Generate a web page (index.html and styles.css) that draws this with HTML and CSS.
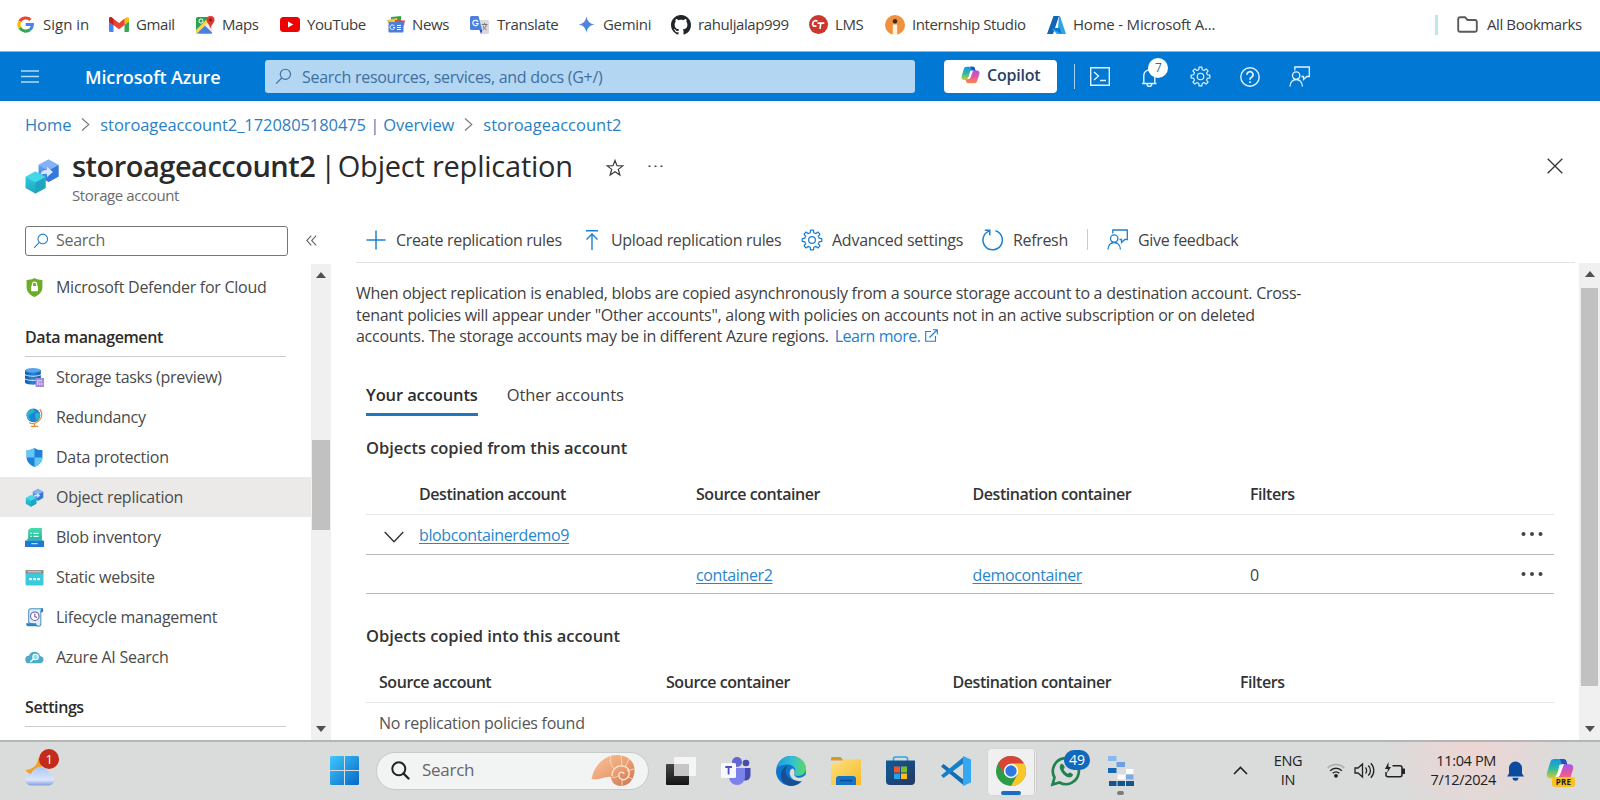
FILE: index.html
```html
<!DOCTYPE html>
<html lang="en">
<head>
<meta charset="utf-8">
<title>storoageaccount2 | Object replication</title>
<link rel="stylesheet" href="styles.css">
</head>
<body>
<svg class="defs" aria-hidden="true">
  <defs>
    <linearGradient id="gTeal" x1="0" y1="0" x2="0" y2="1"><stop offset="0" stop-color="#35d4e4"/><stop offset="1" stop-color="#1fa5c4"/></linearGradient>
    <linearGradient id="gBlue" x1="0" y1="0" x2="0" y2="1"><stop offset="0" stop-color="#7db0f5"/><stop offset="1" stop-color="#2f78d8"/></linearGradient>
    <linearGradient id="gWin" x1="0" y1="0" x2="1" y2="1"><stop offset="0" stop-color="#3fc8fb"/><stop offset="1" stop-color="#0667c8"/></linearGradient>
    <linearGradient id="gCopA" x1="0" y1="0" x2="0" y2="1"><stop offset="0" stop-color="#1693e8"/><stop offset=".5" stop-color="#2fb9a0"/><stop offset="1" stop-color="#d8cf2c"/></linearGradient>
    <linearGradient id="gCopB" x1="0" y1="0" x2="0" y2="1"><stop offset="0" stop-color="#a558e8"/><stop offset=".5" stop-color="#e8569a"/><stop offset="1" stop-color="#f98a4a"/></linearGradient>
    <linearGradient id="gGem" x1="0" y1="0" x2="1" y2="1"><stop offset="0" stop-color="#8f86c8"/><stop offset=".5" stop-color="#4a86e0"/><stop offset="1" stop-color="#2a9be8"/></linearGradient>
    <linearGradient id="gEdge" x1="0" y1="0" x2="1" y2="0"><stop offset="0" stop-color="#1b9de2"/><stop offset=".55" stop-color="#35c1d0"/><stop offset="1" stop-color="#5fd95f"/></linearGradient>
    <linearGradient id="gFold" x1="0" y1="0" x2="1" y2="1"><stop offset="0" stop-color="#ffe07a"/><stop offset="1" stop-color="#f5bb2c"/></linearGradient>
    <linearGradient id="gStore" x1="0" y1="0" x2="1" y2="1"><stop offset="0" stop-color="#0f5c9a"/><stop offset="1" stop-color="#253760"/></linearGradient>
    <linearGradient id="gCloud" x1="0" y1="0" x2="0" y2="1"><stop offset="0" stop-color="#a9c8f5"/><stop offset=".7" stop-color="#dde6fb"/><stop offset="1" stop-color="#7f9fe0"/></linearGradient>
    <linearGradient id="gShell" x1="0" y1="0" x2="1" y2="1"><stop offset="0" stop-color="#f9c49a"/><stop offset=".5" stop-color="#eda277"/><stop offset="1" stop-color="#c9744e"/></linearGradient>
    <linearGradient id="gDb" x1="0" y1="0" x2="1" y2="0"><stop offset="0" stop-color="#0f5ca8"/><stop offset=".5" stop-color="#2a82d8"/><stop offset="1" stop-color="#0f5ca8"/></linearGradient>
    <linearGradient id="gDoc" x1="0" y1="0" x2="0" y2="1"><stop offset="0" stop-color="#46dcae"/><stop offset="1" stop-color="#1fae98"/></linearGradient>
    <linearGradient id="gBlack" x1="0" y1="0" x2="0" y2="1"><stop offset="0" stop-color="#454545"/><stop offset="1" stop-color="#151515"/></linearGradient>
  </defs>
  <symbol id="i-search" viewBox="0 0 18 18"><g fill="none" stroke="currentColor" stroke-width="1.2"><circle cx="11" cy="6.700" r="5.400"/><path d="M7.100 10.600 1.200 16.600"/></g></symbol>
  <symbol id="i-gear" viewBox="0 0 24 24"><g fill="none" stroke="currentColor" stroke-width="1.350" stroke-linejoin="round">
    <circle cx="12" cy="12" r="3.700"/>
    <path id="tooth" d="M8.860 4.420 10 4.300 10.400 1.300h3.200l.4 3 1.140.12"/>
    <use href="#tooth" transform="rotate(45 12 12)"/><use href="#tooth" transform="rotate(90 12 12)"/><use href="#tooth" transform="rotate(135 12 12)"/><use href="#tooth" transform="rotate(180 12 12)"/><use href="#tooth" transform="rotate(225 12 12)"/><use href="#tooth" transform="rotate(270 12 12)"/><use href="#tooth" transform="rotate(315 12 12)"/></g></symbol>
  <symbol id="i-feedback" viewBox="0 0 21 21"><g fill="none" stroke="currentColor" stroke-width="1.300"><circle cx="7.200" cy="9.600" r="3.700"/><path d="M1 20.500c0-4.300 2.800-7 6.200-7s6.200 2.700 6.200 7M5.800 4.500V1h14.500v9.500h-2.500l-3.300 3v-3h-2"/></g></symbol>
  <symbol id="i-cubes" viewBox="0 0 34 36">
    <path d="M23.500 1.500 33.500 7v11.500L23.500 24l-10-5.500V7z" fill="url(#gBlue)"/><path d="M23.500 12.500 33.500 7v11.500L23.500 24z" fill="#3378da"/><path d="M13.500 7l10-5.500 10 5.500-10 5.500z" fill="#85b2f6"/>
    <path d="M10.300 13.500 20.500 19v11L10.300 35.500.5 30V19z" fill="url(#gTeal)"/><path d="M10.300 24.300 20.500 19v11L10.300 35.500z" fill="#1fa5c0"/><path d="M.5 19l9.800-5.500L20.500 19l-10.200 5.300z" fill="#42d8e8"/>
    <path d="M15.500 16.500c.5-3 3-4.500 6.500-4.400V9l6 5-6 5v-3.300c-2.500-.2-4.500.3-6.500.8z" fill="#d5e8fc"/></symbol>
  <symbol id="i-copilot" viewBox="0 0 30 28">
    <path d="M9 1h9.500c2 0 3 1 3.500 3l1 3.500h-4c-2 0-3 .8-3.600 2.700l-3.300 9.500C11.500 21.300 10.500 22 9 22H5c-3.500 0-5-2.500-4-6L4.500 4.500C5.200 2.200 6.500 1 9 1z" fill="url(#gCopA)"/>
    <path d="M15 1h3.500c2 0 3 1 3.500 3l1 3.500h-6z" fill="#264fc0"/>
    <path d="M21 27h-9.500c-2 0-3-1-3.500-3l-.8-3H10c2 0 3-.8 3.600-2.700L17 9c.6-1.700 1.500-2.300 3-2.300h5c3.500 0 5 2.300 4 5.800l-3.500 11C24.800 25.800 23.500 27 21 27z" fill="url(#gCopB)"/>
    <path d="M14.500 7.500c-1.200 3.500-1.500 8.500-4.500 13h1.500c2.600 0 3.200-1.300 4-3.600l3-8.400c.4-1.100 1-1.800 2-1.800h-3.500z" fill="#fff"/></symbol>
  <symbol id="i-dots" viewBox="0 0 22 6"><g fill="#444"><circle cx="2.500" cy="3" r="2"/><circle cx="11" cy="3" r="2"/><circle cx="19.500" cy="3" r="2"/></g></symbol>
  <symbol id="i-chevr" viewBox="0 0 9 15"><path d="M1 1.500 7.800 7.500 1 13.500" fill="none" stroke="#767676" stroke-width="1.100"/></symbol>
</svg>

<nav class="bookmarks">
  <a class="bm"><svg width="17" height="17" viewBox="0 0 18 18" fill="none" stroke-width="3.300"><path d="M3 5.600A7.300 7.300 0 0 1 14.200 4" stroke="#ea4335"/><path d="M3 5.500a7.300 7.300 0 0 0 0 7" stroke="#fbbc05"/><path d="M3 12.400A7.300 7.300 0 0 0 13.700 14.500" stroke="#34a853"/><path d="M9.200 9h7.100a7.300 7.300 0 0 1-2.600 5.500" stroke="#4285f4"/></svg><span class="t-sign">Sign in</span></a>
  <a class="bm"><svg width="20" height="15" viewBox="0 0 20 15"><path d="M0 2.500V13.500A1.400 1.400 0 0 0 1.400 15H4.500V5z" fill="#4285f4"/><path d="M20 2.500V13.500A1.400 1.400 0 0 1 18.600 15H15.500V5z" fill="#34a853"/><path d="M15.500 1.500 18 .3c1-.4 2 .3 2 1.500v3L15.500 8z" fill="#fbbc04"/><path d="M0 1.800C0 .3 1.600-.4 2.700.4L10 6 15.500 1.500V8L10 12.200 0 4.800z" fill="#ea4335"/><path d="M0 1.800C0 .3 1.600-.4 2.700.4L4.500 1.700V8L0 4.800z" fill="#c5221f"/></svg><span>Gmail</span></a>
  <a class="bm"><svg width="19" height="18" viewBox="0 0 19 18"><rect y="1" width="16" height="16.500" rx="1.500" fill="#2ba24c"/><path d="M1 17.500 8.500 9.500l7.500 8z" fill="#4285f4"/><path d="M0 14 12 2l3 3L3 17.500H0z" fill="#fbd34c"/><path d="M16 8v9L8.500 9.800 12 6z" fill="#e8e8e8"/><path d="M9 9.800 16.300 17H1.500z" fill="#4a80e0"/><circle cx="5" cy="5" r="2.100" fill="none" stroke="#fff"/><path d="M14.500 0a4 4 0 0 1 4 4c0 3-3.500 4.500-4 9-.5-4.500-4-6-4-9a4 4 0 0 1 4-4z" fill="#dc3a31"/><circle cx="14.500" cy="4" r="1.500" fill="#8c1a15"/></svg><span>Maps</span></a>
  <a class="bm"><svg width="20" height="15" viewBox="0 0 20 15"><rect width="20" height="15" rx="3.500" fill="#f00000"/><path d="M8 4.500v6l5.300-3z" fill="#fff"/></svg><span>YouTube</span></a>
  <a class="bm"><svg width="18" height="17" viewBox="0 0 18 17"><path d="M4 1 14 0v6H4z" fill="#31a350"/><path d="M0 4 10 2l1 5H1z" fill="#f5c33b"/><path d="m8 4 10 .5-1 5H8z" fill="#e34a3d"/><rect x="1.500" y="6" width="15" height="10.500" rx="1" fill="#4a7fe0"/><path d="M7.400 10A2.300 2.300 0 1 0 7.700 11.500H6M10 9.500h4M10 11.500h4M10 13.500h4" fill="none" stroke="#fff"/></svg><span>News</span></a>
  <a class="bm"><svg width="19" height="18" viewBox="0 0 19 18"><path d="M8 4h9.500A1.500 1.500 0 0 1 19 5.500V16.500A1.500 1.500 0 0 1 17.500 18H11z" fill="#d8dade"/><path d="M1.500 0H8.500L12 14H1.500A1.500 1.500 0 0 1 0 12.500V1.500A1.500 1.500 0 0 1 1.500 0z" fill="#4a80df"/><path d="M9.500 14h3L11 18z" fill="#234bb4"/><path d="M8 5.800A2.700 2.700 0 1 0 8.200 7.500H5.800" fill="none" stroke="#fff" stroke-width="1.200"/><path d="M11.800 8.500h5.700M14.600 7v1.500M16.500 8.500c-.5 2-2 4-3.500 5M13 10c1 2 2 3 3.500 3.800" stroke="#777" fill="none"/></svg><span class="t-tr">Translate</span></a>
  <a class="bm"><svg width="17" height="17" viewBox="0 0 17 17"><path d="M8.500 0C9 5 12 8 17 8.500 12 9 9 12 8.500 17 8 12 5 9 0 8.500 5 8 8 5 8.500 0z" fill="url(#gGem)"/></svg><span class="t-gem">Gemini</span></a>
  <a class="bm"><svg width="20" height="20" viewBox="0 0 16 16"><path fill="#22262b" d="M8 0C3.580 0 0 3.580 0 8c0 3.540 2.290 6.530 5.470 7.590.4.070.55-.17.55-.38 0-.19-.01-.82-.01-1.490-2.010.37-2.530-.49-2.690-.94-.09-.23-.48-.94-.82-1.130-.28-.15-.68-.52-.01-.53.63-.01 1.080.58 1.230.82.72 1.210 1.870.87 2.330.66.07-.52.28-.87.51-1.070-1.780-.2-3.640-.89-3.640-3.950 0-.87.31-1.590.82-2.150-.08-.2-.36-1.020.08-2.120 0 0 .67-.21 2.200.82.64-.18 1.320-.27 2-.27s1.360.09 2 .27c1.530-1.040 2.200-.82 2.200-.82.44 1.100.16 1.920.08 2.120.51.56.82 1.270.82 2.150 0 3.070-1.870 3.750-3.650 3.950.29.25.54.73.54 1.480 0 1.070-.01 1.930-.01 2.200 0 .21.15.46.55.38A8.010 8.010 0 0 0 16 8c0-4.420-3.580-8-8-8z"/></svg><span class="t-gh">rahuljalap999</span></a>
  <a class="bm"><svg width="19" height="19" viewBox="0 0 19 19"><circle cx="9.500" cy="9.500" r="9.500" fill="#c9372f"/><path d="M8.500 6C5.500 5 4 6.500 3.700 8.500S4.500 11.500 7.500 11M8.500 8.200h6.800M11.800 8.200 11 13.800" fill="none" stroke="#fff" stroke-width="1.700"/></svg><span>LMS</span></a>
  <a class="bm"><svg width="20" height="20" viewBox="0 0 20 20"><circle cx="10" cy="10" r="10" fill="#f0913d"/><path d="M7.800 9.500h4.400V20H7.800z" fill="#fff3e2"/><circle cx="10" cy="6.300" r="2.200" fill="#3a2a20"/></svg><span class="t-is">Internship Studio</span></a>
  <a class="bm"><svg width="19" height="18" viewBox="0 0 19 18"><path d="M6.500 0H12L6 18H0z" fill="#1265b4"/><path d="M12 0h1l6 18H10L5 13l6-1z" fill="#2fa5e6"/><path d="M4.800 12H13l1.500 6z" fill="#0d78d0"/></svg><span class="t-home">Home - Microsoft A...</span></a>
  <span class="bm-sep"></span>
  <a class="bm"><svg width="21" height="17" viewBox="0 0 21 17"><path d="M1.200 3a1.800 1.800 0 0 1 1.800-1.800H8L10.500 4H18a1.800 1.800 0 0 1 1.800 1.800V14a1.800 1.800 0 0 1-1.800 1.800H3A1.800 1.800 0 0 1 1.200 14z" fill="none" stroke="#5a5a5a" stroke-width="1.900"/></svg><span class="t-all">All Bookmarks</span></a>
</nav>

<header class="azbar">
  <svg class="burger" width="18" height="13" viewBox="0 0 18 13"><path d="M0 1h18M0 6.500h18M0 12h18" stroke="#b5dcf7" stroke-width="1.300"/></svg>
  <span class="brand">Microsoft Azure</span>
  <div class="gsearch"><svg width="17" height="17"><use href="#i-search"/></svg><span>Search resources, services, and docs (G+/)</span></div>
  <button class="copilot"><svg width="19" height="18"><use href="#i-copilot"/></svg><span>Copilot</span></button>
  <span class="az-sep"></span>
  <div class="az-icons">
    <svg width="20" height="19" viewBox="0 0 20 19"><path d="M.7.700h18.600v17.600H.7zM4 5l4.500 4L4 13M10 13.500h6" fill="none" stroke="#e3f3ff" stroke-width="1.400"/></svg>
    <span class="bell"><svg width="17" height="20" viewBox="0 0 17 20"><path d="M1 16.500h14.500M2.800 16.500V8.500a5.500 5.500 0 0 1 11 0v8M6 17a2.400 2.400 0 0 0 4.800 0" fill="none" stroke="#e3f3ff" stroke-width="1.400"/></svg><b class="bell-n">7</b></span>
    <svg width="21" height="21"><use href="#i-gear"/></svg>
    <svg width="20" height="20" viewBox="0 0 20 20" fill="none" stroke="#e3f3ff"><circle cx="10" cy="10" r="9.200" stroke-width="1.400"/><path d="M7 7.800a3 3 0 1 1 4.500 2.500c-1 .6-1.500 1.200-1.500 2.400M10 14.200v1.800" stroke-width="1.700"/></svg>
    <svg width="21" height="21"><use href="#i-feedback"/></svg>
  </div>
</header>

<nav class="crumbs"><a>Home</a><svg width="9" height="15"><use href="#i-chevr"/></svg><a class="t-cr">storoageaccount2_1720805180475 | Overview</a><svg width="9" height="15"><use href="#i-chevr"/></svg><a class="t-cr2">storoageaccount2</a></nav>

<section class="titlebar">
  <svg class="t-icon" width="34" height="36"><use href="#i-cubes"/></svg>
  <div class="t-text">
    <h1><b>storoageaccount2</b><i>|</i><span>Object replication</span></h1>
    <p>Storage account</p>
  </div>
  <svg class="star" width="18" height="18" viewBox="0 0 18 18"><path d="M9 1.500l2 5.200 5.800.2-4.500 3.500 1.600 5.600L9 12.800 4.100 16l1.600-5.600L1.200 6.900l5.800-.2z" fill="none" stroke="#3b3b3b" stroke-width="1.200"/></svg>
  <svg class="more" width="15" height="3" viewBox="0 0 15 3"><path d="M.5.500h2v1.500h-2zM6.500.500h2v1.500h-2zM12.500.500h2v1.500h-2z" fill="#444"/></svg>
  <svg class="close" width="16" height="16" viewBox="0 0 16 16"><path d="M.7.700l14.600 14.600M15.300.700.7 15.300" stroke="#333" stroke-width="1.300"/></svg>
</section>

<div class="workspace">
  <aside class="side">
    <div class="side-top">
      <div class="ssearch"><svg width="16" height="16"><use href="#i-search"/></svg><span>Search</span></div>
      <svg width="11" height="11" viewBox="0 0 11 11"><path d="M5.300.7.8 5.500l4.500 4.800M10.200.7 5.700 5.500l4.500 4.800" fill="none" stroke="#666" stroke-width="1.100"/></svg>
    </div>
    <div class="side-body">
      <div class="menu">
        <a class="mi"><svg width="19" height="19" viewBox="0 0 18 18"><path d="M9 0c2.500 1.500 4.500 1.800 7.500 1.800V9c0 4-3 7-7.500 9-4.500-2-7.500-5-7.500-9V1.800C4.500 1.800 6.500 1.500 9 0z" fill="#6dac28"/><rect x="5.700" y="7.500" width="6.600" height="5" rx=".6" fill="#fff"/><path d="M7 8V6a2 2 0 0 1 4 0v2" fill="none" stroke="#fff" stroke-width="1.200"/></svg><span class="t-def">Microsoft Defender for Cloud</span></a>
        <h2>Data management</h2>
        <a class="mi"><svg width="19" height="19" viewBox="0 0 18 18"><path d="M0 2v11.500c0 3 15 3 15 0V2z" fill="url(#gDb)"/><ellipse cx="7.500" cy="2.200" rx="7.500" ry="2.200" fill="#56a5ee"/><path d="M0 6c1 2.300 14 2.300 15 0M0 10c1 2.300 14 2.300 15 0" stroke="#c5e2fa" fill="none"/><rect x="10" y="9.500" width="8" height="8.500" fill="#a78be0"/><path d="M12 12v4M12 12h4M14 14v2M16 14v2" stroke="#e5dbfa" fill="none"/></svg><span class="t-st">Storage tasks (preview)</span></a>
        <a class="mi"><svg width="19" height="19" viewBox="0 0 18 18"><circle cx="8" cy="7" r="6.500" fill="#1d83d8"/><path d="M4 2c3-2 5-1 5 1S5 5 4 7s2 3 1 5C2 10 1 8 1.600 5zM10 5c2-1 4 0 4.400 1 0 3-1.500 5-3.400 6-1-2-2-5-1-7z" fill="#27b5c9"/><path d="M14 1c3.500 5 2 11-5 13.500-2 .5-4 0-5-.8M9 14.500v2.500M5.500 17.400h7" fill="none" stroke="#e58b3e" stroke-width="1.200"/></svg><span>Redundancy</span></a>
        <a class="mi"><svg width="19" height="19" viewBox="0 0 18 18"><path d="M9 0c2.500 1.500 4.500 2 7.500 2v7c0 4-3 7-7.500 9-4.500-2-7.500-5-7.500-9V2C4.500 2 6.500 1.500 9 0z" fill="#1f82d9"/><path d="M9 0v9H1.500V2C4.500 2 6.500 1.500 9 0zM9 9h7.500c0 4-3 7-7.500 9z" fill="#62c8f5"/></svg><span>Data protection</span></a>
        <a class="mi on"><svg width="19" height="19"><use href="#i-cubes"/></svg><span>Object replication</span></a>
        <a class="mi"><svg width="19" height="19" viewBox="0 0 18 18"><path d="M3 2 5.500 0H16v13H3z" fill="url(#gDoc)"/><path d="M5 5h1.500M8 5h5M5 8h1.500M8 8h5" stroke="#e0fbf2" stroke-width="1.200"/><path d="M0 12h18v6H0z" fill="#2078d4"/><path d="M1 12l1.500-2h13L17 12z" fill="#35b5c0"/><path d="M6 14.800h6" stroke="#b5dcfa" stroke-width="1.200"/></svg><span>Blob inventory</span></a>
        <a class="mi"><svg width="19" height="19" viewBox="0 0 18 18"><path d="M.5 5h17v10.500a1 1 0 0 1-1 1h-15a1 1 0 0 1-1-1z" fill="#3bc9de"/><path d="M.5 2h17v3.300H.5z" fill="#858585"/><path d="M2.500 3.600h13" stroke="#ddd"/><path d="M4 10.500h2.500M7.800 10.500h2.500M11.600 10.500h2.500" stroke="#e5fbff" stroke-width="2"/></svg><span>Static website</span></a>
        <a class="mi"><svg width="19" height="19" viewBox="0 0 18 18"><path d="M3.500 14V3c0-1.500 1-2.300 2-2.300h11L15 3v12c0 1.500-1 2.300-2 2.300z" fill="#dcecf9" stroke="#4894c8"/><path d="M1 14.500h9.500c0 1.500 1 2.800 2.500 2.800H3c-1.200 0-2-1-2-2.800z" fill="#2e85b8"/><path d="M15 .5h1.500c1 0 1 3.500 0 3.500H15z" fill="#2e85b8"/><circle cx="9.300" cy="7.800" r="4" fill="#fff" stroke="#6c5aa6"/><path d="M9.300 5.300v2.800l2 .8" fill="none" stroke="#6c5aa6"/></svg><span class="t-lc">Lifecycle management</span></a>
        <a class="mi"><svg width="19" height="19" viewBox="0 0 18 18"><path d="M4 14.500a3.600 3.600 0 0 1-.3-7.200C4.500 4.800 6.500 3.500 9 3.500c2.800 0 4.800 1.700 5.300 4.100 2 .2 3.300 1.600 3.300 3.400 0 2-1.600 3.500-3.600 3.500z" fill="#4cabc9"/><circle cx="10" cy="8.600" r="2.600" fill="#8fdcf0" stroke="#fff"/><path d="M8 10.500 5 13.200" stroke="#fff" stroke-width="1.300"/></svg><span>Azure AI Search</span></a>
        <h2 class="last">Settings</h2>
      </div>
      <div class="sb"><i class="up"></i><i class="thumb"></i><i class="down"></i></div>
    </div>
  </aside>

  <main class="main">
    <div class="cmds">
      <a class="c1"><svg width="20" height="20" viewBox="0 0 20 20"><path d="M10 .5v19M.5 10h19" stroke="#1f7fd0" stroke-width="1.500"/></svg><span>Create replication rules</span></a>
      <a class="c2"><svg width="14" height="20" viewBox="0 0 14 20"><path d="M1 .800h12M7 20V4.300M1.500 9.500 7 4l5.500 5.500" fill="none" stroke="#1f7fd0" stroke-width="1.400"/></svg><span>Upload replication rules</span></a>
      <a class="c3"><svg width="22" height="22"><use href="#i-gear"/></svg><span>Advanced settings</span></a>
      <a class="c4"><svg width="22" height="22" viewBox="0 0 22 22"><path d="M13.500 1.800A9.700 9.700 0 1 1 7 2.100M2.800 1.200h5v5" fill="none" stroke="#1f7fd0" stroke-width="1.500"/></svg><span>Refresh</span></a>
      <span class="cmd-sep"></span>
      <a class="c5"><svg width="21" height="21"><use href="#i-feedback"/></svg><span>Give feedback</span></a>
    </div>
    <div class="main-body">
      <div class="content">
        <p class="intro"><span>When object replication is enabled, blobs are copied asynchronously from a source storage account to a destination account. Cross-</span><br><span>tenant policies will appear under "Other accounts", along with policies on accounts not in an active subscription or on deleted</span><br><span>accounts. The storage accounts may be in different Azure regions. <a>Learn more.</a></span> <svg width="13" height="13" viewBox="0 0 13 13"><path d="M6 2.500H.7v9.800h9.800V7M4.500 8.500 12 1M7.800.700h4.500v4.500" fill="none" stroke="#1f7fd0" stroke-width="1.100"/></svg></p>
        <div class="tabs"><a class="tab sel">Your accounts</a><a class="tab">Other accounts</a></div>
        <h3>Objects copied from this account</h3>
        <div class="row head from"><span></span><span>Destination account</span><span>Source container</span><span>Destination container</span><span>Filters</span></div>
        <div class="row from"><span><svg width="20" height="12" viewBox="0 0 20 12"><path d="M.7 1 10 10.800 19.300 1" fill="none" stroke="#333" stroke-width="1.400"/></svg></span><span><a>blobcontainerdemo9</a></span><span></span><span></span><span></span><svg width="22" height="6"><use href="#i-dots"/></svg></div>
        <div class="row from r3"><span></span><span></span><span><a>container2</a></span><span><a>democontainer</a></span><span>0</span><svg width="22" height="6"><use href="#i-dots"/></svg></div>
        <h3 class="h-into">Objects copied into this account</h3>
        <div class="row head into"><span>Source account</span><span>Source container</span><span>Destination container</span><span>Filters</span></div>
        <div class="empty">No replication policies found</div>
      </div>
      <div class="sb sb-main"><i class="up"></i><i class="thumb"></i><i class="down"></i></div>
    </div>
  </main>
</div>

<footer class="taskbar">
  <div class="weather"><svg width="32" height="30" viewBox="0 0 32 30"><path d="M13 2C13 9 8 13.500 .5 14 3 18.500 9 19.500 13 16.500s6-11 0-14.500z" fill="#f0a02e"/><path d="M6 29.500a6 6 0 0 1 .3-12C8 13.500 11 11 15 11s7.500 2.500 9 6.300a6.200 6.200 0 0 1 0 12.200z" fill="url(#gCloud)"/></svg><b>1</b></div>
  <svg class="start" width="29" height="29" viewBox="0 0 29 29"><path d="M0 1.500Q0 0 1.500 0H14v14H0zM15 0h12.500Q29 0 29 1.500V14H15zM0 15h14v14H1.500Q0 29 0 27.500zM15 15h14v12.500Q29 29 27.500 29H15z" fill="url(#gWin)"/></svg>
  <div class="tsearch"><svg width="19" height="19" viewBox="0 0 19 19"><circle cx="7.800" cy="7.800" r="6.500" fill="none" stroke="#222" stroke-width="2"/><path d="m12.500 12.500 5 5" stroke="#222" stroke-width="2.400" stroke-linecap="round"/></svg><span>Search</span>
    <svg class="shell" width="44" height="31" viewBox="0 0 44 31"><path d="M.5 24C3 10 14 0 26 0c11 0 18 7 17.500 16S37 31 30 31c-6 0-10-4-10-9-6-1-12 4-19.500 2z" fill="url(#gShell)"/><path d="M21 21c0-7 5-11 11-10 7 1 8 10 3 13-4 2-8-1-7-5 1-3 5-2 5 0" fill="none" stroke="#fde6cf" stroke-width="1.400"/><path d="M30 0l1 11M38 4l-4 8M43 14l-7 2M41 24l-5-3M31 31l0-6M21 22c3 1 5 0 7-2M20 1c-2 5 0 9 3 13" fill="none" stroke="#fbdcc0" stroke-width=".9"/></svg></div>
  <div class="apps">
    <span><svg width="30" height="28" viewBox="0 0 30 28"><rect y="7" width="23" height="21" rx="1" fill="url(#gBlack)"/><rect x="8" y="0" width="22" height="19" rx="1" fill="#f6f6f6" opacity=".93"/><path d="M8 7h15v12H8z" fill="#c6c6c6"/></svg></span>
    <span><svg width="30" height="28" viewBox="0 0 30 28"><circle cx="16" cy="5" r="5" fill="#6268d0"/><circle cx="25" cy="6" r="3.300" fill="#454bb0"/><path d="M20 11h9.500v7c0 4-3 6-6.500 5.500z" fill="#464bb0"/><path d="M8 11h16v9a8 8 0 0 1-16 0z" fill="#7b83eb"/><rect y="6" width="15" height="15" rx="1.500" fill="#f8f8ff"/><path d="M4.300 10h6.700M7.600 10v7.500" stroke="#4b53bc" stroke-width="1.800"/></svg></span>
    <span><svg width="30" height="30" viewBox="0 0 30 30"><circle cx="15" cy="15" r="15" fill="#0f75cc"/><path d="M.8 12C2 5 8 0 15 0c9 0 15 6 15 12.500 0 4.500-3.500 7.500-8 7.500-3 0-4-1-4-2s1.200-1.500 1.200-4C19 11 16 8.500 11.500 8.500 7 8.500 3 10 .8 12z" fill="url(#gEdge)"/><path d="M12 9.500c-3 3-3.500 8 .5 12s10 4 14.500 1.300C24 28 19.500 30 15 30 8 29 4 24 5 18c.7-4 3.500-7.500 7-8.500z" fill="#164f94"/><path d="M18 18c0 2 3 4.500 7 3.500 2-.5 3.500-1.500 4.300-3l.7 5-2 1.500C21 26 15.500 24 14 19c-.8-3 .5-6 2.500-6.500C19.500 14 18.500 16.500 18 18z" fill="#dcdddd"/></svg></span>
    <span><svg width="30" height="28" viewBox="0 0 30 28"><path d="M0 1.500Q0 0 1.500 0H9.500L12.500 3.500H0z" fill="#d89a1c"/><path d="M0 6h9l3.500-3.500H30V28H0z" fill="url(#gFold)"/><path d="M5 28v-6q0-3 3-3h14q3 0 3 3v6z" fill="#1672c4"/><path d="M9 23.500h12" stroke="#0a4a94" stroke-width="1.600"/></svg></span>
    <span><svg width="29" height="29" viewBox="0 0 29 29"><path d="M7.500 5V3q0-2 2-2h10q2 0 2 2v2" fill="none" stroke="#2ba8e4" stroke-width="1.600"/><path d="M0 4.500h29V25q0 4-4 4H4q-4 0-4-4z" fill="url(#gStore)"/><path d="M8 10.500h6v6H8z" fill="#f0562e"/><path d="M15 10.500h6v6h-6z" fill="#80bb28"/><path d="M8 17.500h6v5.500H8z" fill="#22a5e8"/><path d="M15 17.500h6v5.500h-6z" fill="#fcbc1c"/></svg></span>
    <span><svg width="30" height="30" viewBox="0 0 30 30"><path d="M2.500 8 23 24v5.500L0 10.500z" fill="#0d6fb5"/><path d="M0 19.500 2.500 22 23 7V.5z" fill="#1480c8"/><path d="M22 0l8 3.500v23L22 30z" fill="#35a6f0"/></svg></span>
    <span class="tile"><svg width="30" height="30" viewBox="0 0 30 30"><circle cx="15" cy="15" r="15" fill="#2e9b46"/><path d="M2 7.500A15 15 0 0 1 28 7.500H15L9 18.500z" fill="#dc4337"/><path d="M28 7.500A15 15 0 0 1 15 30L21.500 18.500 15 7.500z" fill="#fbc62c"/><circle cx="15" cy="15" r="7.200" fill="#fff"/><circle cx="15" cy="15" r="5.700" fill="#2f78e4"/></svg></span>
    <span class="wa"><svg width="30" height="30" viewBox="0 0 30 30"><path d="M1.500 28.500 3.500 21.500A13 13 0 1 1 8.500 26.500z" fill="none" stroke="#22824f" stroke-width="2.700"/><path d="M10 8c-3 3 0 8 3.500 11.200 3.500 3 7.500 3 8.500-.2.200-1-2.500-2.500-3.500-2.500l-1.500 1.300c-2-1-3.500-2.600-4.500-4.600l1.300-1.500C13.500 10.500 12 7 10 8z" fill="#22824f"/></svg><b>49</b></span>
    <span class="dotted"><svg width="26" height="30" viewBox="0 0 26 30"><path d="M0 0h8.500v5H0z" fill="#8ab9ee"/><path d="M8.500 6H17v5H8.500z" fill="#6ba0e2"/><path d="M0 12h8.500v5H0z" fill="#1467b5"/><path d="M18 13h7.500v5H18zM9.500 18.500h8v5h-8z" fill="#fafcff"/><path d="M18 18.500h7.500v5H18z" fill="#7baae5"/><path d="M1 25h7.500v5H1zM9.500 25H17v5H9.500zM18 25h8v5h-8z" fill="#145590"/></svg></span>
  </div>
  <div class="tray">
    <svg width="15" height="9" viewBox="0 0 15 9"><path d="M1 8 7.500 1.500 14 8" fill="none" stroke="#222" stroke-width="1.600"/></svg>
    <div class="lang">ENG<br>IN</div>
    <svg width="18" height="15" viewBox="0 0 18 15" fill="none" stroke="#222" stroke-width="1.400"><path d="M.8 5a11.500 11.500 0 0 1 16.400 0" stroke="#aaa"/><path d="M3.200 7.700a8.200 8.200 0 0 1 11.600 0M5.700 10.300a4.700 4.700 0 0 1 6.600 0"/><circle cx="9" cy="12.800" r="1.200" fill="#222"/></svg>
    <svg width="21" height="17" viewBox="0 0 21 17" fill="none" stroke="#222" stroke-width="1.300"><path d="M1 6v5h3l4.500 4V2L4 6zM11.500 5.500c1.500 1.500 1.500 4.500 0 6M14.200 3.500c3 2.500 3 7.500 0 10M16.800 1.200c4 4 4 10.500 0 14.500"/></svg>
    <svg width="22" height="17" viewBox="0 0 22 17" fill="none" stroke="#222" stroke-width="1.500"><path d="M8.500 3.800H16q2 0 2 2v7q0 2-2 2H4q-2 0-2-2V10"/><path d="M18.500 7.200h1.700v4h-1.700z" fill="#222"/><path d="M4.500 0 1 7h3L3 11l4-6H4.500z" fill="#222" stroke="none"/></svg>
    <div class="clock"><span>11:04 PM</span><span>7/12/2024</span></div>
    <svg width="17" height="19" viewBox="0 0 17 19"><path d="M0 15.500 2 12.500V7a6.500 6.500 0 0 1 13 0v5.500l2 3zM5.500 16.800h6a3 3 0 0 1-6 0z" fill="#0b4a9c"/></svg>
    <span class="pre"><svg width="28" height="26"><use href="#i-copilot"/></svg><b>PRE</b></span>
  </div>
</footer>
</body>
</html>
```
FILE: styles.css
```css
* { box-sizing: border-box; }
html, body { margin: 0; height: 800px; overflow: hidden; }
body { background: #fff; color: #444; font: 16px/20px "Open Sans", "Noto Sans", sans-serif; letter-spacing: -.27px; white-space: nowrap; display: flex; flex-direction: column; }
svg { display: block; flex: none; overflow: visible; }
h1, h2, h3, p { margin: 0; }
.defs { position: absolute; width: 0; height: 0; }

.bookmarks { flex: none; height: 52px; border-bottom: 1px solid #8fb4d3; display: grid; grid-template-columns: 92px 87px 84px 107px 83px 108px 93px 138px 76px 162px 388px 22px auto; padding: 0 0 2px 17px; align-items: center; font-size: 15px; letter-spacing: -.4px; color: #3c3c3c; }
.bm { display: flex; align-items: center; gap: 7px; }
.bm span { padding-bottom: 2px; }
.bm .t-sign { margin-left: 2px; letter-spacing: 0; }
.bm .t-tr { margin-left: 1px; }
.bm .t-gem { margin-left: 1px; letter-spacing: -.3px; }
.bm .t-home { letter-spacing: -.2px; }
.bm .t-all { margin-left: 2px; }
.bm-sep { width: 3px; height: 20px; background: #bfe6ea; }

.azbar { flex: none; height: 49px; background: #0078d4; display: flex; align-items: center; color: #e3f3ff; }
.burger { margin-left: 21px; }
.brand { margin-left: 46px; width: 180px; font-size: 18px; font-weight: 600; color: #fff; letter-spacing: -.13px; }
.gsearch { width: 650px; height: 33px; background: #b3d6f2; border-radius: 3px; display: flex; align-items: center; padding-left: 10px; gap: 10px; color: #3f6f9e; }
.copilot { margin-left: 29px; width: 113px; height: 33px; border: 0; border-radius: 4px; background: #fff; display: flex; align-items: center; padding: 0 0 3px 17px; gap: 7px; font: 600 16px "Open Sans", sans-serif; letter-spacing: -.2px; color: #2c3f66; }
.az-sep { width: 1px; height: 25px; background: #a9d2f2; margin: 0 15px 0 17px; }
.az-icons { display: flex; align-items: center; width: 220px; justify-content: space-between; }
.bell { position: relative; display: block; margin-left: 2px; margin-right: 2px; }
.bell-n { position: absolute; left: 7px; top: -9px; width: 20px; height: 20px; border-radius: 50%; background: #fff; color: #2f6ea8; font: 12px/19px "Open Sans", sans-serif; text-align: center; }

.crumbs { flex: none; height: 48px; display: flex; align-items: center; padding: 0 0 1px 25px; gap: 10px; color: #2a7fc4; font-size: 16.5px; letter-spacing: -.08px; }
.t-cr2 { letter-spacing: 0; }
.titlebar { flex: none; height: 65px; display: flex; padding-left: 25px; color: #2a2a2a; }
.t-icon { margin-top: 9px; }
.t-text { margin-left: 13px; width: 534px; margin-top: -1px; }
h1 { font-size: 29px; line-height: 36px; font-weight: 400; letter-spacing: -.5px; }
h1 b { font-weight: 600; }
h1 i { font-style: normal; margin: 0 2px 0 5px; }
h1 span { letter-spacing: -.22px; }
.t-text p { font-size: 15px; margin-top: 1px; color: #6b6b6b; letter-spacing: -.4px; }
.star { margin-top: 10px; }
.more { margin: 16px 0 0 24px; }
.close { margin: 9px 0 0 884px; }

.workspace { flex: none; height: 526px; display: flex; overflow: hidden; }
.side { width: 331px; }
.side-top { height: 50px; display: flex; padding: 12px 0 0 25px; align-items: flex-start; }
.ssearch { width: 263px; height: 30px; border: 1px solid #777; border-radius: 3px; display: flex; align-items: center; padding-left: 7px; gap: 7px; color: #666; }
.ssearch span { padding-bottom: 2px; }
.ssearch svg { color: #1f7fd0; }
.side-top > svg { margin: 9px 0 0 18px; }
.side-body { display: flex; height: 476px; }
.menu { width: 311px; padding-top: 3px; overflow: hidden; }
.mi { display: flex; align-items: center; height: 40px; padding-left: 25px; gap: 12px; color: #4a4a4a; }
.mi.on { background: #eceae9; }
h2 { font-size: 16px; line-height: 34px; height: 37px; margin: 13px 25px 0; border-bottom: 1px solid #ccc; font-weight: 600; color: #2c2c2c; letter-spacing: -.4px; }
.sb { width: 20px; background: #f0f0f0; display: flex; flex-direction: column; align-items: center; }
.up { border: 5px solid transparent; border-top: 0; border-bottom: 6px solid #505050; margin-top: 8px; }
.down { border: 5px solid transparent; border-bottom: 0; border-top: 6px solid #505050; margin: auto 0 8px; }
.thumb { width: 18px; height: 90px; margin-top: 162px; background: #c1c1c1; }

.main { flex: 1; display: flex; flex-direction: column; }
.cmds { flex: none; height: 49px; width: 1219px; margin-left: 25px; border-bottom: 1px solid #e3e3e3; padding: 3px 0 0 10px; display: flex; align-items: center; letter-spacing: -.33px; }
.cmds a { display: flex; align-items: center; gap: 10px; }
.cmds svg { color: #1f7fd0; }
.cmds .c1 { width: 219px; }
.cmds .c2 { width: 216px; gap: 12px; }
.cmds .c3 { width: 181px; gap: 9px; letter-spacing: -.25px; }
.cmds .c4 { width: 105px; gap: 9px; }
.cmd-sep { width: 1px; height: 21px; background: #ccc; margin-right: 19px; }
.main-body { flex: 1; display: flex; }
.content { width: 1248px; padding: 20px 0 0 35px; color: #3f3f3f; }
.intro { margin-left: -10px; line-height: 21.6px; height: 85px; }
.intro a { color: #1f7fd0; margin-left: 2px; letter-spacing: -.45px; }
.intro svg { display: inline-block; margin-left: 1px; }
.tabs { display: flex; gap: 29px; height: 49px; font-size: 16.5px; letter-spacing: -.07px; }
.tab { height: 48px; padding-top: 17px; }
.tab.sel { font-weight: 600; color: #2c2c2c; border-bottom: 3px solid #1f78bd; letter-spacing: -.12px; }
h3 { font-size: 16.5px; line-height: 20px; font-weight: 600; color: #333; margin-top: 21px; letter-spacing: -.03px; }
.row { width: 1188px; display: grid; align-items: center; height: 40px; border-bottom: 1px solid #b9b9b9; }
.row.head { border-color: #e6e6e6; color: #333; font-weight: 600; letter-spacing: -.45px; margin-top: 16px; height: 41px; }
.from { grid-template-columns: 53px 277px 276.5px 277.5px 271px 22px; }
.from span svg { margin: 4px 0 0 18px; }
.from > svg { margin-bottom: 2px; }
.row a { color: #2a86cc; text-decoration: underline; text-underline-offset: 2px; letter-spacing: -.37px; }
.row.r3 { height: 39px; padding-top: 1px; }
.h-into { margin-top: 32px; }
.into { grid-template-columns: 287px 286.5px 287.5px auto; padding-left: 13px; }
.empty { padding: 10px 0 0 13px; color: #555; }
.sb-main { width: 21px; }
.sb-main .thumb { width: 17px; height: 398px; margin-top: 11px; }

.taskbar { flex: none; height: 60px; padding-bottom: 1px; border-top: 2px solid #b4b5b5; display: flex; align-items: center; background: radial-gradient(circle at 1475px 0, #eed5d3 0, rgba(238,213,211,0) 90px), #dadbdb; color: #222; }
.weather { position: relative; margin-left: 25px; width: 305px; }
.weather b { position: absolute; left: 14px; top: -7px; width: 20px; height: 20px; border-radius: 50%; background: #c42b1c; color: #fff; font: 13px/20px "Open Sans", sans-serif; text-align: center; }
.start { margin-right: 17px; }
.tsearch { width: 273px; height: 38px; border: 1px solid #c9cbcb; border-radius: 19px; background: #f2f4f4; display: flex; align-items: center; padding-left: 14px; gap: 12px; color: #666; font-size: 17px; }
.tsearch span { padding-bottom: 2px; }
.shell { margin-left: auto; margin-right: 13px; }
.apps { display: flex; align-items: center; margin-left: 4px; }
.apps > span { width: 55px; height: 46px; display: flex; align-items: center; justify-content: center; position: relative; }
.apps .tile::before { content: ""; position: absolute; left: 4px; top: 0; width: 46px; height: 46px; background: #f0f0f0; border: 1px solid #d5d5d5; border-right: 3px double #ccc; border-radius: 5px; }
.apps .tile::after { content: ""; position: absolute; left: 18px; bottom: -1px; width: 20px; height: 4px; border-radius: 2px; background: #1870c4; }
.tile svg { position: relative; }
.wa b { position: absolute; left: 26px; top: 2px; width: 26px; height: 20px; border-radius: 10px; background: #1169bd; color: #fff; font: 14px/19px "Open Sans", sans-serif; text-align: center; letter-spacing: 0; }
.dotted::after { content: ""; position: absolute; left: 24px; bottom: -1px; width: 7px; height: 4px; border-radius: 2px; background: #7c7c7c; }
.tray { display: flex; align-items: center; margin-left: 85px; font-size: 14.5px; line-height: 19px; letter-spacing: -.35px; }
.lang { width: 50px; margin: 0 14px 0 15px; text-align: center; padding-bottom: 1px; }
.tray > .lang + svg { margin-right: 9px; }
.tray > .lang + svg + svg { margin-right: 9px; }
.clock { width: 90px; margin-right: 11px; display: flex; flex-direction: column; align-items: flex-end; padding-bottom: 2px; }
.pre { position: relative; margin-left: 22px; }
.pre b { position: absolute; left: 6px; top: 19px; width: 23px; height: 10px; border-radius: 3px; background: #f8c221; color: #222; font: 700 8px/10px "Open Sans", sans-serif; text-align: center; letter-spacing: .3px; }
```
